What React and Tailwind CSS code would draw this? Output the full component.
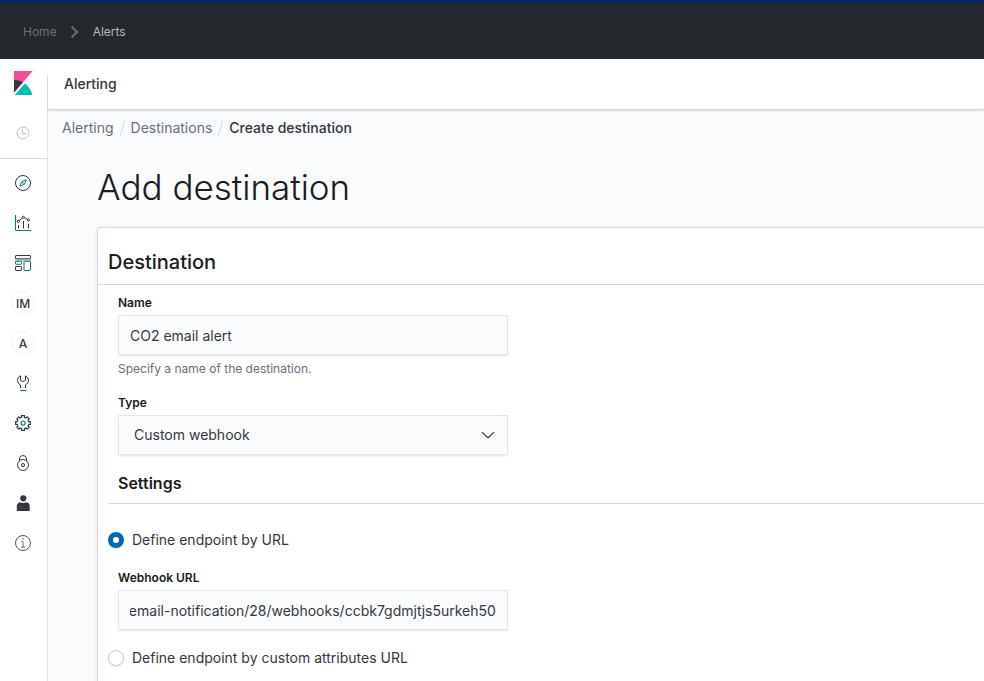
import { useEffect, useRef, useState } from "react";

const DARK = "#343741";
const TEAL = "#017d73";

function KibanaLogo() {
  return (
    <svg viewBox="0 0 32 32" className="size-6" aria-hidden="true">
      <path fill="#f04e98" d="M4 0v28.789L28.935.017z" />
      <path fill="#343741" d="M4 12v16.789l11.906-13.738A24.721 24.721 0 0 0 4 12" />
      <path fill="#00bfb3" d="M18.479 16.664L6.268 30.754l-1.073 1.237h23.191c-1.252-6.292-4.883-11.719-9.908-15.327" />
    </svg>
  );
}

function Icon({ children }) {
  return (
    <svg viewBox="0 0 16 16" className="size-4" fill="none" stroke={DARK} strokeWidth="1" aria-hidden="true">
      {children}
    </svg>
  );
}

function ClockIcon() {
  return (
    <svg viewBox="0 0 16 16" className="size-4" fill="none" stroke="#c2c3c6" strokeWidth="1" aria-hidden="true">
      <circle cx="8" cy="8" r="6" />
      <path d="M7.500 4v4.500H11" />
    </svg>
  );
}

function DiscoverIcon() {
  return (
    <Icon>
      <circle cx="8" cy="8" r="7.500" />
      <path stroke={TEAL} d="M11.200 4.800L9.400 9.300 4.800 11.200l1.800-4.600z" />
      <circle cx="8" cy="8" r="0.600" stroke={TEAL} strokeWidth="0.600" />
    </Icon>
  );
}

function VisualizeIcon() {
  return (
    <Icon>
      <path stroke={TEAL} d="M.5 0v15.500H16" />
      <path d="M4 5.800l3.200-2.600M9.500 2.800l3 1.600" />
      <circle cx="3.300" cy="6.400" r="1.100" />
      <circle cx="8.300" cy="2.300" r="1.100" />
      <circle cx="13.500" cy="5" r="1.100" />
      <path d="M3.500 10v3.500M8.500 6v7.500M13.500 8.500v5" />
    </Icon>
  );
}

function DashboardIcon() {
  return (
    <Icon>
      <rect x="0.500" y="0.500" width="15" height="3.300" rx="0.600" />
      <path stroke="#98a2b3" strokeWidth="1.400" d="M0 4.900h16" />
      <rect x="0.500" y="6.300" width="6" height="3" rx="0.600" stroke={TEAL} />
      <rect x="0.500" y="11.500" width="6" height="4" rx="0.600" />
      <rect x="9" y="6.300" width="6.500" height="9.200" rx="0.600" stroke={TEAL} />
    </Icon>
  );
}

function WrenchIcon() {
  return (
    <Icon>
      <path d="M5.500 13V9.900C3.700 9 2.500 7.500 2.500 5.500 2.500 3.500 3.600 1.700 5.500 .8V5.200L8 6.500 10.500 5.200V.8C12.400 1.700 13.500 3.500 13.500 5.500 13.500 7.500 12.300 9 10.500 9.900V13" />
      <path stroke={TEAL} d="M5 15.500h6" />
    </Icon>
  );
}

const gearPath = (() => {
  const points = [];
  const teeth = 8;
  for (let i = 0; i < teeth; i += 1) {
    const center = (i * 2 * Math.PI) / teeth;
    [
      [-0.24, 5.9],
      [-0.2, 7.5],
      [0.2, 7.5],
      [0.24, 5.9],
    ].forEach(([offset, radius]) => {
      const x = 8 + radius * Math.sin(center + offset);
      const y = 8 - radius * Math.cos(center + offset);
      points.push(`${x.toFixed(2)} ${y.toFixed(2)}`);
    });
  }
  return `M${points.join("L")}Z`;
})();

function GearIcon() {
  return (
    <Icon>
      <path d={gearPath} strokeWidth="1.150" />
      <circle cx="8" cy="8" r="2" stroke={TEAL} strokeWidth="1.150" />
    </Icon>
  );
}

function LockIcon() {
  return (
    <Icon>
      <circle cx="8" cy="10" r="5.500" />
      <circle cx="8" cy="10" r="1.500" />
      <path d="M4.500 5.700V4a3.500 3.500 0 0 1 7 0v1.700" />
    </Icon>
  );
}

function UserIcon() {
  return (
    <Icon>
      <circle cx="8.300" cy="3.300" r="3.100" fill={DARK} stroke="none" />
      <path fill={DARK} stroke="none" d="M1.800 16v-4.500C1.800 9 3.200 7.500 5 7.200c2 1.100 4.400 1.100 6.500 0 2 .3 3.200 1.800 3.200 4.300V16z" />
    </Icon>
  );
}

function InfoIcon() {
  return (
    <Icon>
      <circle cx="8" cy="8" r="7.500" stroke="#535966" />
      <path stroke="#69707d" d="M6.500 6.500H8V12M6 12.200h4" />
      <circle cx="8" cy="4" r="0.800" fill="#69707d" stroke="none" />
    </Icon>
  );
}

function Initials({ text }) {
  return (
    <span className="flex size-6 items-center justify-center rounded-full border border-[#f0f1f4] pt-px text-xs font-medium text-[#343741]">
      {text}
    </span>
  );
}

const apps = [
  { name: "Discover", icon: <DiscoverIcon /> },
  { name: "Visualize", icon: <VisualizeIcon /> },
  { name: "Dashboard", icon: <DashboardIcon /> },
  { name: "Index Management", icon: <Initials text="IM" /> },
  { name: "Alerting", icon: <Initials text="A" /> },
  { name: "Dev Tools", icon: <WrenchIcon /> },
  { name: "Management", icon: <GearIcon /> },
  { name: "Security", icon: <LockIcon /> },
  { name: "Account", icon: <UserIcon /> },
  { name: "About", icon: <InfoIcon /> },
];

function Sidebar() {
  return (
    <aside className="flex w-12 shrink-0 flex-col bg-white">
      <a href="#home" aria-label="Kibana" className="flex h-12 items-center justify-center pr-0.5">
        <KibanaLogo />
      </a>
      <div className="flex grow flex-col border-r border-[#e0e4ec]">
        <div className="flex h-13 items-center justify-center border-b border-[#d3dae6] pr-0.5">
          <button type="button" aria-label="Recently viewed">
            <ClockIcon />
          </button>
        </div>
        <nav className="flex flex-col pt-1 pr-px">
          {apps.map((app) => (
            <a key={app.name} href="#app" aria-label={app.name} className="flex h-10 items-center justify-center">
              {app.icon}
            </a>
          ))}
        </nav>
      </div>
    </aside>
  );
}

const fieldStyle =
  "h-10 w-full rounded-none border border-[#e0e4ef] bg-[#fbfcfd] text-sm text-[#343741] shadow-[0_2px_2px_-1px_rgba(152,162,179,0.3)] outline-none";
const labelStyle = "block text-xs/4 font-semibold text-[#1a1c21]";

function Radio({ id, label, checked, onChange }) {
  return (
    <div className="flex items-center gap-2">
      <input
        id={id}
        type="radio"
        name="endpoint"
        checked={checked}
        onChange={onChange}
        className="size-4 shrink-0 appearance-none rounded-full border border-[#c9cbcd] bg-white shadow-[0_2px_2px_-1px_rgba(152,162,179,0.3)] checked:border-5 checked:border-[#006bb4]"
      />
      <label htmlFor={id} className="text-sm/6 text-[#343741]">
        {label}
      </label>
    </div>
  );
}

export default function App() {
  const [name, setName] = useState("CO2 email alert");
  const [url, setUrl] = useState("https://host/email-notification/28/webhooks/ccbk7gdmjtjs5urkeh50");
  const [endpoint, setEndpoint] = useState("url");
  const urlRef = useRef(null);

  useEffect(() => {
    const showEnd = () => {
      if (urlRef.current) urlRef.current.scrollLeft = urlRef.current.scrollWidth;
    };
    showEnd();
    document.fonts.ready.then(showEnd);
  }, []);

  return (
    <div className="flex h-screen flex-col overflow-hidden bg-[#fafbfd] font-['Inter',sans-serif] text-[#343741]">
      <header className="shrink-0 border-t-3 border-[#002a69] bg-[#25282c]">
        <nav aria-label="Site" className="flex h-14 items-center gap-3 px-[23px] pt-0.5 text-xs">
          <a href="#home" className="text-[#6b7375]">Home</a>
          <svg viewBox="0 0 12 12" className="size-3" fill="none" stroke="#687072" strokeWidth="2" aria-hidden="true">
            <path d="M2.500 .5L8 6 2.500 11.500" />
          </svg>
          <a href="#alerts" className="text-[#b3babd]">Alerts</a>
        </nav>
      </header>

      <div className="flex min-h-0 grow">
        <Sidebar />
        <div className="flex min-w-0 grow flex-col">
          <div className="flex shrink-0 border-b border-[#cfd6e4] bg-white shadow-[0_2px_2px_-1px_rgba(152,162,179,0.35)]">
            <div className="-ml-px mt-4 border-l border-[#d3dae6]" />
            <div className="flex h-[50px] items-center px-4 text-sm font-medium">Alerting</div>
          </div>

          <main className="min-h-0 grow overflow-hidden">
            <nav aria-label="Breadcrumbs" className="flex items-center gap-2 px-3.5 pt-2 text-sm/5">
              <a href="#alerting" className="text-[#69707d]">Alerting</a>
              <span className="h-4 w-px rotate-15 bg-[#d3dae6]" />
              <a href="#destinations" className="text-[#69707d]">Destinations</a>
              <span className="h-4 w-px rotate-15 bg-[#d3dae6]" />
              <span className="font-medium">Create destination</span>
            </nav>

            <div className="pt-[25px] pl-12">
              <h1 className="pl-px text-[35px]/12 font-light text-[#1a1c21]">Add destination</h1>

              <section className="mt-4 ml-px rounded-tl border-t border-l border-[#d3dae6] bg-white pb-8 shadow-[0_2px_4px_rgba(152,162,179,0.3)]">
                <h2 className="border-b border-[#d3dae6] px-2.5 pt-[18px] pb-1.5 text-xl/8 font-medium text-[#1a1c21]">
                  Destination
                </h2>

                <form className="pt-2.5 pl-2.5" onSubmit={(e) => e.preventDefault()}>
                  <div className="w-100 pl-2.5">
                    <label htmlFor="name" className={labelStyle}>Name</label>
                    <input
                      id="name"
                      value={name}
                      onChange={(e) => setName(e.target.value)}
                      className={`${fieldStyle} mt-1 px-[11px]`}
                    />
                    <p className="mt-1 text-xs/5 text-[#69707d]">Specify a name of the destination.</p>
                  </div>

                  <div className="mt-4 w-100 pl-2.5">
                    <label htmlFor="type" className={labelStyle}>Type</label>
                    <div className="relative mt-1">
                      <select id="type" className={`${fieldStyle} appearance-none px-[15px]`}>
                        <option>Custom webhook</option>
                      </select>
                      <svg
                        viewBox="0 0 16 16"
                        className="pointer-events-none absolute top-3 right-3 size-4"
                        fill="none"
                        stroke="#343741"
                        strokeWidth="1.200"
                        strokeLinecap="round"
                        strokeLinejoin="round"
                        aria-hidden="true"
                      >
                        <path d="M2.300 5.300L7.500 10.500a.7.7 0 0 0 1 0L13.700 5.300" />
                      </svg>
                    </div>
                  </div>

                  <h3 className="mt-4 border-b border-[#d3dae6] pb-2 pl-2.5 text-base/6 font-semibold text-[#1a1c21]">
                    Settings
                  </h3>

                  <div className="pt-6">
                    <Radio
                      id="endpoint-url"
                      label="Define endpoint by URL"
                      checked={endpoint === "url"}
                      onChange={() => setEndpoint("url")}
                    />
                    <div className="w-100 pt-[18px] pb-4 pl-2.5">
                      <label htmlFor="webhook-url" className={labelStyle}>Webhook URL</label>
                      <input
                        id="webhook-url"
                        ref={urlRef}
                        value={url}
                        onChange={(e) => setUrl(e.target.value)}
                        className={`${fieldStyle} mt-1 px-[11px]`}
                      />
                    </div>
                    <Radio
                      id="endpoint-custom"
                      label="Define endpoint by custom attributes URL"
                      checked={endpoint === "custom"}
                      onChange={() => setEndpoint("custom")}
                    />
                  </div>
                </form>
              </section>
            </div>
          </main>
        </div>
      </div>
    </div>
  );
}
